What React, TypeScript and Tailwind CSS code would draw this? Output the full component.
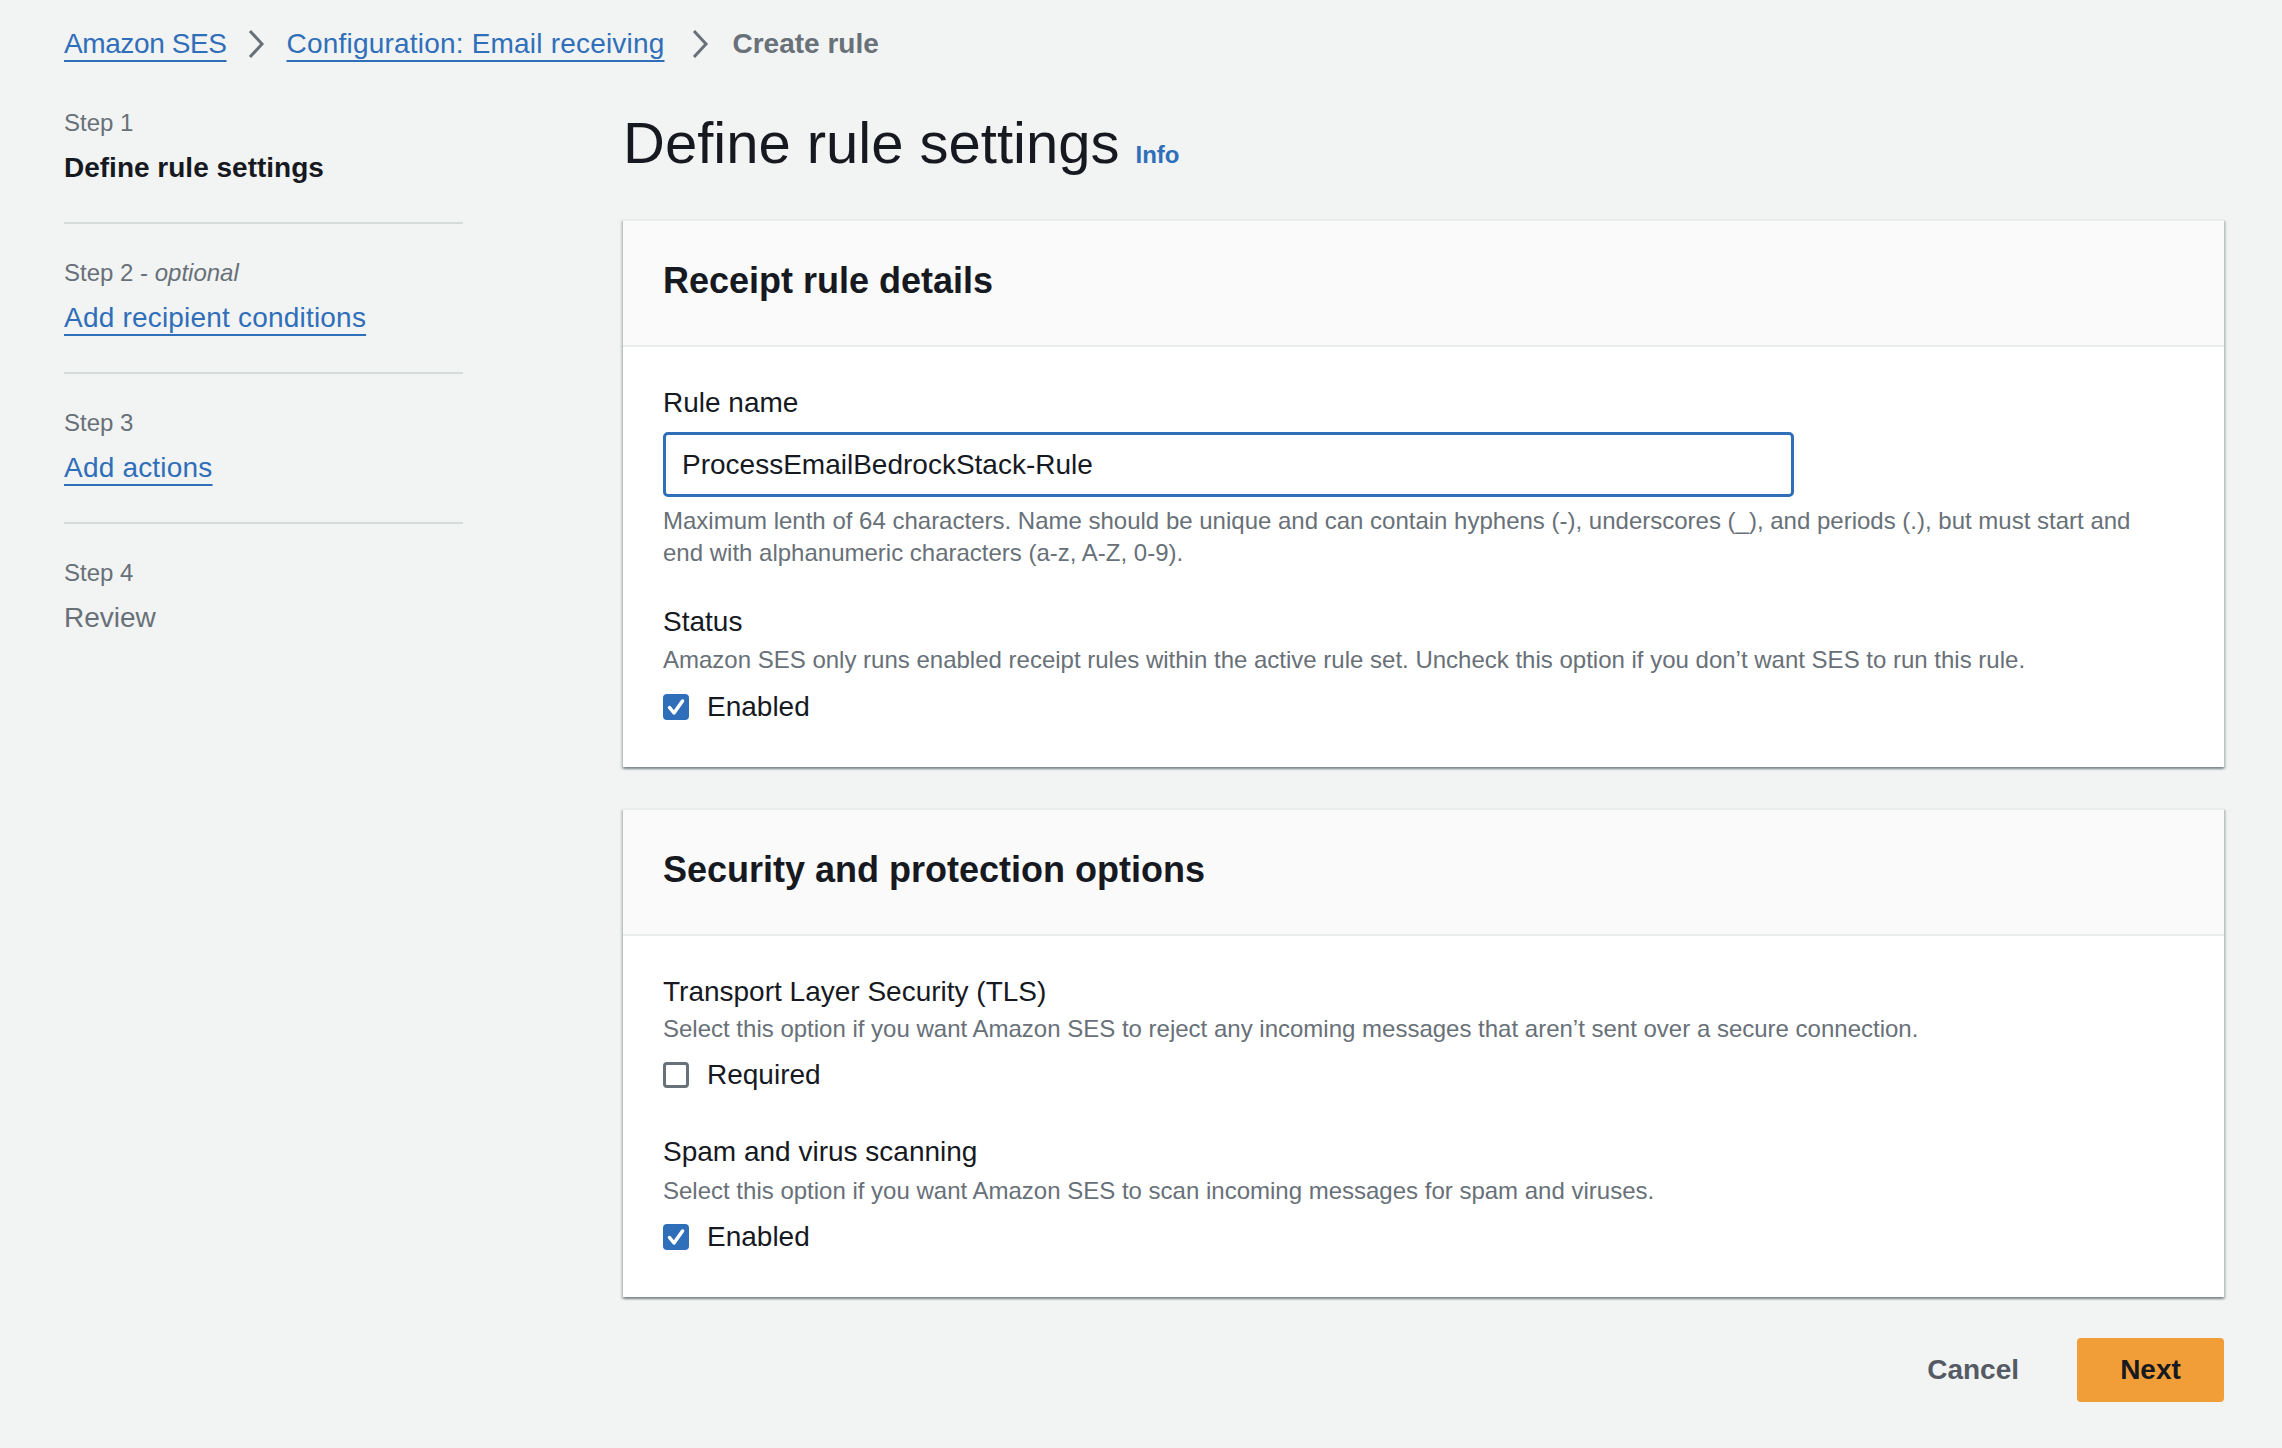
import React from "react";

const Chevron = () => (
  <svg width="18" height="30" viewBox="0 0 18 30" className="shrink-0">
    <path d="M3 2 L15 15 L3 28" stroke="#687078" strokeWidth="3" fill="none" strokeLinejoin="miter" />
  </svg>
);

const Checkbox = ({ checked }: { checked: boolean }) =>
  checked ? (
    <span className="flex h-[26px] w-[26px] shrink-0 items-center justify-center rounded-[4px] bg-[#2f6fba]">
      <svg width="26" height="26" viewBox="0 0 26 26">
        <path d="M6.5 13.5 L11 19 L19.5 7" stroke="white" strokeWidth="3.5" fill="none" strokeLinecap="round" strokeLinejoin="round" />
      </svg>
    </span>
  ) : (
    <span className="h-[26px] w-[26px] shrink-0 rounded-[4px] border-[3px] border-[#687078] bg-white" />
  );

const Card = ({ title, children }: { title: string; children: React.ReactNode }) => (
  <section className="bg-white border-t-2 border-[#eaeded] shadow-[0_2px_2px_0_rgba(0,28,36,0.3),2px_2px_2px_0_rgba(0,28,36,0.15),-2px_2px_2px_0_rgba(0,28,36,0.15)]">
    <div className="flex h-[126px] items-center border-b-2 border-[#eaeded] bg-[#fafafa] px-10 pb-[5px]">
      <h2 className="text-[36px] font-bold leading-[44px] text-[#16191f]">{title}</h2>
    </div>
    <div className="px-10 pt-[36px] pb-[40px]">{children}</div>
  </section>
);

const Label = ({ children, className = "" }: { children: React.ReactNode; className?: string }) => (
  <div className={"text-[28px] leading-[40px] text-[#16191f] " + className}>{children}</div>
);

const Desc = ({ children, className = "" }: { children: React.ReactNode; className?: string }) => (
  <div className={"text-[24px] leading-[32px] text-[#687078] " + className}>{children}</div>
);

const CheckRow = ({ checked, label, className = "" }: { checked: boolean; label: string; className?: string }) => (
  <div className={"flex h-10 items-center gap-[18px] " + className}>
    <Checkbox checked={checked} />
    <span className="text-[28px] leading-[40px] text-[#16191f]">{label}</span>
  </div>
);

const StepBlock = ({
  step,
  optional,
  title,
  kind,
  first,
}: {
  step: string;
  optional?: boolean;
  title: string;
  kind: "active" | "link" | "disabled";
  first?: boolean;
}) => (
  <div className={(first ? "pt-0" : "border-t-2 border-[#d5dbdb] pt-[33px]") + " pb-[34px]"}>
    <div className="text-[24px] leading-[32px] text-[#687078]">
      {step}
      {optional && (
        <>
          {" - "}
          <i>optional</i>
        </>
      )}
    </div>
    <div className="mt-[9px] text-[28px] leading-[40px]">
      {kind === "active" && <span className="font-bold text-[#16191f]">{title}</span>}
      {kind === "link" && (
        <a className="tracking-[0.2px] text-[#2f6fba] underline decoration-2 underline-offset-[7px]">{title}</a>
      )}
      {kind === "disabled" && <span className="text-[#687078]">{title}</span>}
    </div>
  </div>
);

export default function App() {
  return (
    <div className="min-h-screen bg-[#f2f3f3] pl-[64px] pr-[58px] font-['Liberation_Sans',Arial,sans-serif] text-[#16191f]">
      {/* Breadcrumb */}
      <nav className="flex h-[64px] items-center pt-[24px] pb-0">
        <div className="flex h-10 items-center text-[28px] leading-[40px]">
          <a className="tracking-[-0.4px] text-[#2f6fba] underline decoration-2 underline-offset-[7px]">Amazon SES</a>
          <span className="ml-[20px] mr-[22px] flex items-center">
            <Chevron />
          </span>
          <a className="tracking-[0.2px] text-[#2f6fba] underline decoration-2 underline-offset-[7px]">Configuration: Email receiving</a>
          <span className="ml-[26px] mr-[24px] flex items-center">
            <Chevron />
          </span>
          <span className="font-bold text-[#687078]">Create rule</span>
        </div>
      </nav>

      <div className="flex">
        {/* Left navigation */}
        <aside className="w-[399px] shrink-0 pt-[43px]">
          <StepBlock first step="Step 1" title="Define rule settings" kind="active" />
          <StepBlock step="Step 2" optional title="Add recipient conditions" kind="link" />
          <StepBlock step="Step 3" title="Add actions" kind="link" />
          <StepBlock step="Step 4" title="Review" kind="disabled" />
        </aside>

        {/* Main */}
        <main className="ml-[160px] flex-1 pt-[47px]">
          <div className="flex items-baseline gap-[16px]">
            <h1 className="text-[58px] font-normal leading-[64px] text-[#16191f]">Define rule settings</h1>
            <a className="text-[24px] font-bold text-[#2f6fba]">Info</a>
          </div>

          <div className="mt-[44px]">
            <Card title="Receipt rule details">
              <Label>Rule name</Label>
              <div className="mt-[9px] flex h-[65px] w-[1131px] items-center rounded-[5px] border-[3px] border-[#2f6fba] bg-white pl-[16px] text-[28px] text-[#16191f]">
                ProcessEmailBedrockStack-Rule
              </div>
              <Desc className="mt-2">
                Maximum lenth of 64 characters. Name should be unique and can contain hyphens (-), underscores (_), and periods (.), but must start and
                <br />
                end with alphanumeric characters (a-z, A-Z, 0-9).
              </Desc>
              <Label className="mt-[33px]">Status</Label>
              <Desc className="mt-[2px]">
                Amazon SES only runs enabled receipt rules within the active rule set. Uncheck this option if you don’t want SES to run this rule.
              </Desc>
              <CheckRow className="mt-[11px]" checked label="Enabled" />
            </Card>
          </div>

          <div className="mt-[41px]">
            <Card title="Security and protection options">
              <Label>Transport Layer Security (TLS)</Label>
              <Desc className="mt-[1px]">
                Select this option if you want Amazon SES to reject any incoming messages that aren’t sent over a secure connection.
              </Desc>
              <CheckRow className="mt-[10px]" checked={false} label="Required" />
              <Label className="mt-[37px]">Spam and virus scanning</Label>
              <Desc className="mt-[3px]">
                Select this option if you want Amazon SES to scan incoming messages for spam and viruses.
              </Desc>
              <CheckRow className="mt-[10px]" checked label="Enabled" />
            </Card>
          </div>

          <div className="mt-[41px] flex items-center justify-end">
            <button className="mr-[30px] h-[64px] px-[28px] text-[28px] font-bold text-[#545b64]">Cancel</button>
            <button className="h-[64px] w-[147px] rounded-[4px] bg-[#f19e39] text-[28px] font-bold text-[#16191f]">
              Next
            </button>
          </div>
        </main>
      </div>
    </div>
  );
}
